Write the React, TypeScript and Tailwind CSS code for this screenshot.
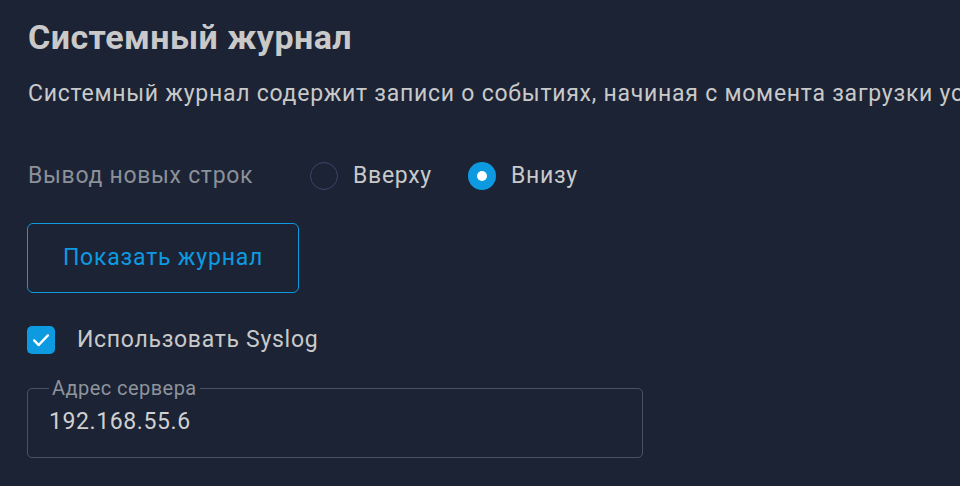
import { useState } from 'react';

export default function App() {
  const [order, setOrder] = useState<'top' | 'bottom'>('bottom');
  const [syslog, setSyslog] = useState(true);

  return (
    <div
      className="w-[960px] h-[486px] overflow-hidden bg-[#1b2335] pl-[28px] pt-[17px]"
      style={{ fontFamily: 'Roboto, "Noto Sans", sans-serif' }}
    >
      <h1 className="text-[34px] leading-[40px] font-bold tracking-[0.45px] text-[#c9c9c9] whitespace-nowrap">
        Системный журнал
      </h1>

      <p className="mt-[23px] text-[23px] leading-[28px] tracking-[0.75px] text-[#c9c9c9] whitespace-nowrap">
        Системный журнал содержит записи о событиях, начиная с момента загрузки устройства
      </p>

      {/* Radio row */}
      <div className="mt-[54px] flex items-center h-[28px] text-[23px] leading-[28px] tracking-[0.7px]">
        <span className="w-[282px] text-[#8b9099]">Вывод новых строк</span>
        <label
          className="flex items-center gap-[15px] cursor-pointer"
          onClick={() => setOrder('top')}
        >
          <span
            className={
              order === 'top'
                ? 'w-[28px] h-[28px] rounded-full bg-[#0d9ae0] flex items-center justify-center'
                : 'w-[28px] h-[28px] rounded-full border border-[#3a4866]'
            }
          >
            {order === 'top' && <span className="w-[10px] h-[10px] rounded-full bg-white" />}
          </span>
          <span className="text-[#c9c9c9]">Вверху</span>
        </label>
        <label
          className="ml-[36px] flex items-center gap-[15px] cursor-pointer"
          onClick={() => setOrder('bottom')}
        >
          <span
            className={
              order === 'bottom'
                ? 'w-[28px] h-[28px] rounded-full bg-[#0d9ae0] flex items-center justify-center'
                : 'w-[28px] h-[28px] rounded-full border border-[#3a4866]'
            }
          >
            {order === 'bottom' && <span className="w-[10px] h-[10px] rounded-full bg-white" />}
          </span>
          <span className="text-[#c9c9c9]">Внизу</span>
        </label>
      </div>

      <button className="block mt-[33px] -ml-px w-[272px] h-[70px] rounded-[6px] border border-[#0d9ae0] text-[#0d9ae0] text-[23px] tracking-[0.8px]">
        Показать журнал
      </button>

      {/* Syslog checkbox */}
      <label
        className="mt-[33px] -ml-px flex items-center gap-[22px] h-[28px] cursor-pointer"
        onClick={() => setSyslog(!syslog)}
      >
        <span
          className={
            syslog
              ? 'w-[28px] h-[28px] rounded-[5px] bg-[#0d9ae0] flex items-center justify-center'
              : 'w-[28px] h-[28px] rounded-[5px] border border-[#3a4866]'
          }
        >
          {syslog && (
            <svg width="22" height="22" viewBox="0 0 24 24" fill="none" stroke="white" strokeWidth="2.6" strokeLinecap="round" strokeLinejoin="round">
              <path d="M4.5 12.5l5 5L19.5 7" />
            </svg>
          )}
        </span>
        <span className="text-[23px] leading-[28px] tracking-[0.7px] text-[#c9c9c9]">Использовать Syslog</span>
      </label>

      {/* Server address */}
      <fieldset className="mt-[23px] -ml-px w-[616px] h-[81px] rounded-[5px] border border-[#4a5262] px-[21px] pt-[9px]">
        <legend className="px-[3px] text-[20px] leading-[22px] tracking-[0.45px] text-[#8f949c]">Адрес сервера</legend>
        <input
          className="block w-full h-[28px] bg-transparent outline-none text-[23px] leading-[28px] tracking-[0.6px] text-[#d0d0d0]"
          defaultValue="192.168.55.6"
        />
      </fieldset>
    </div>
  );
}
